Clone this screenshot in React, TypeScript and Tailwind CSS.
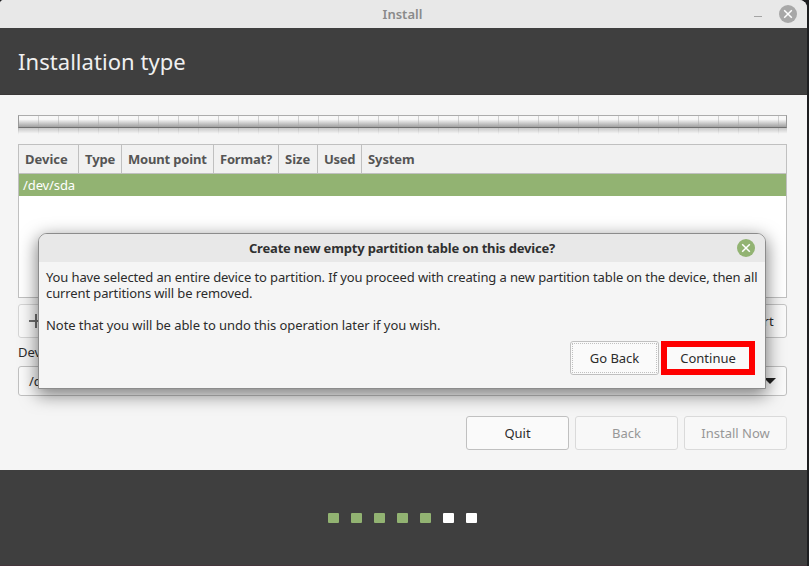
import type { ReactNode } from "react";

const columns = [
  { label: "Device", width: "w-[60px]", track: "tracking-normal" },
  { label: "Type", width: "w-[43px]", track: "tracking-[-0.1px]" },
  { label: "Mount point", width: "w-[92px]", track: "tracking-[-0.17px]" },
  { label: "Format?", width: "w-[65px]", track: "tracking-[-0.2px]" },
  { label: "Size", width: "w-[39px]", track: "tracking-normal" },
  { label: "Used", width: "w-[44px]", track: "tracking-[-0.25px]" },
];

const steps = [true, true, true, true, true, false, false];

function CloseButton({ className }: { className: string }) {
  return (
    <svg className={`h-[18px] w-[18px] ${className}`} viewBox="0 0 18 18">
      <circle cx="9" cy="9" r="9" fill="currentColor" />
      <path d="M5.2 5.2 12.8 12.8M12.8 5.2 5.2 12.8" stroke="#fff" strokeWidth="1.5" />
    </svg>
  );
}

function Button({ children, className }: { children: ReactNode; className: string }) {
  return (
    <button className={`flex h-[34px] items-center justify-center rounded-[3px] border ${className}`}>
      {children}
    </button>
  );
}

function DiskBar() {
  return (
    <div className="h-5">
      <div className="h-[13px] border border-t-[#acacac] border-r-[#999] border-b-[#707070] border-l-[#999] bg-linear-to-b from-[#f8f8f8] from-30% to-[#a0a0a0]">
        <div className="h-full bg-[repeating-linear-gradient(to_right,transparent_0px,transparent_19px,#aaaaaa80_19px,#aaaaaa80_20px)]" />
      </div>
      <div className="h-[7px] bg-linear-to-b from-[#c8c8c8] to-[#f5f5f5] to-80%">
        <div className="h-full bg-[repeating-linear-gradient(to_right,#9999994d_0px,#9999994d_1px,transparent_1px,transparent_20px)] mask-linear-180 mask-linear-from-0% mask-linear-to-100%" />
      </div>
    </div>
  );
}

function Dialog() {
  return (
    <section className="absolute top-[233px] left-[38px] flex h-[156px] w-[728px] flex-col rounded-t-[9px] border border-[#8c8c8c] bg-[#f5f5f5] shadow-[0_5px_17px_1px_rgba(0,0,0,0.5)]">
      <header className="grid h-7 shrink-0 grid-cols-[1fr_auto_1fr] items-center rounded-t-[8px] bg-[#e8e8e8]">
        <span />
        <h2 className="pt-[2px] text-[13px] font-bold tracking-[-0.18px] text-[#303030]">Create new empty partition table on this device?</h2>
        <CloseButton className="mr-[10px] justify-self-end text-[#92b372]" />
      </header>
      <div className="flex flex-1 flex-col pt-[7px] pr-[10px] pl-[7px] leading-4 whitespace-nowrap text-[#2c2c2c]">
        <p className="tracking-[-0.115px]">
          You have selected an entire device to partition. If you proceed with creating a new partition table on the device, then all
          <br />
          current partitions will be removed.
        </p>
        <p className="mt-4 tracking-[-0.06px]">Note that you will be able to undo this operation later if you wish.</p>
        <div className="mt-2 flex justify-end gap-[2px]">
          <Button className="w-[89px] border-[#c0c0c0] bg-[#fafafa] p-px">
            <span className="flex h-full w-full items-center justify-center border border-dotted border-[#c0c0c0]">Go Back</span>
          </Button>
          <button className="h-[34px] w-[94px] border-6 border-[#fe0000] bg-[#fafafa]">Continue</button>
        </div>
      </div>
    </section>
  );
}

export default function App() {
  return (
    <div className="relative h-[566px] w-[809px] overflow-hidden bg-[#1e1f21] font-['Noto_Sans','Open_Sans',sans-serif] text-[13px] text-[#2c2c2c]">
      <div className="flex h-[566px] w-[807px] flex-col overflow-hidden rounded-tl-[4px] rounded-tr-[8px] bg-[#f5f5f5]">
        <header className="grid h-7 shrink-0 grid-cols-[1fr_auto_1fr] items-center bg-[#e8e8e8]">
          <span />
          <span className="pr-[2px] pt-[2px] font-semibold text-[#8a8a8a]">Install</span>
          <div className="mr-[10px] flex items-center justify-end gap-[17px]">
            <span className="mt-[5px] h-px w-2 bg-[#a4a4a4]" />
            <CloseButton className="text-[#a8a8a8]" />
          </div>
        </header>
        <h1 className="flex h-[67px] shrink-0 items-center border-b border-[#3a3838] bg-[#3f3f3f] pl-[18px] text-[22px] tracking-[0.05px] text-[#f0f0f0]">Installation type</h1>
        <main className="flex h-[375px] shrink-0 flex-col pt-5 pr-5 pl-[18px]">
          <DiskBar />
          <div className="mt-[9px] h-[154px] border border-[#c0c0c0] bg-white">
            <div className="flex h-[29px] border-b border-[#c0c0c0] bg-[#f1f1f1] font-bold text-[#555]">
              {columns.map((c) => (
                <div key={c.label} className={`flex shrink-0 items-center border-r border-[#c0c0c0] pt-[2px] pl-[6px] whitespace-nowrap ${c.width} ${c.track}`}>{c.label}</div>
              ))}
              <div className="flex items-center pt-[2px] pl-[6px] tracking-[-0.1px]">System</div>
            </div>
            <div className="flex h-[22px] items-center bg-[#92b372] pt-[2px] pl-1 tracking-[-0.1px] text-white">/dev/sda</div>
          </div>
          <div className="mt-[6px] flex justify-between">
            <Button className="w-10 border-[#d5d5d5] bg-[#f9f9f9] pr-1">
              <svg className="h-[14px] w-[14px]" viewBox="0 0 14 14" stroke="#707070" strokeWidth="2"><path d="M0 7h14M7 0v14" /></svg>
            </Button>
            <Button className="w-[66px] border-[#c4c4c4] bg-[#fafafa] pt-[2px]">Revert</Button>
          </div>
          <span className="mt-[5px] flex h-[18px] items-center pt-[2px]">Device for boot loader installation:</span>
          <div className="mt-[5px] flex h-[30px] items-center justify-between rounded-[3px] border border-[#c0c0c0] bg-[#fafafa] pr-[10px] pl-[10px]">
            <span className="pt-[2px]">/dev/sda</span>
            <svg className="h-[6px] w-3" viewBox="0 0 12 6" fill="#222"><path d="M0 0h12L6 6z" /></svg>
          </div>
          <div className="mt-5 flex justify-end gap-[6px]">
            <Button className="w-[103px] border-[#c0c0c0] bg-[#fafafa] pt-[2px]">Quit</Button>
            <Button className="w-[103px] border-[#dadada] bg-[#f8f8f8] pt-[2px] text-[#979797]">Back</Button>
            <Button className="w-[103px] border-[#dadada] bg-[#f8f8f8] pt-[2px] text-[#979797]">Install Now</Button>
          </div>
        </main>
        <footer className="flex h-24 shrink-0 items-center justify-center gap-3 border-b border-[#45363c] bg-[#3f3f3f] pr-[2px]">
          {steps.map((done, i) => (
            <span key={i} className={`h-[10px] w-[11px] rounded-[1px] ${done ? "bg-[#92b372]" : "bg-white"}`} />
          ))}
        </footer>
      </div>
      <Dialog />
    </div>
  );
}
